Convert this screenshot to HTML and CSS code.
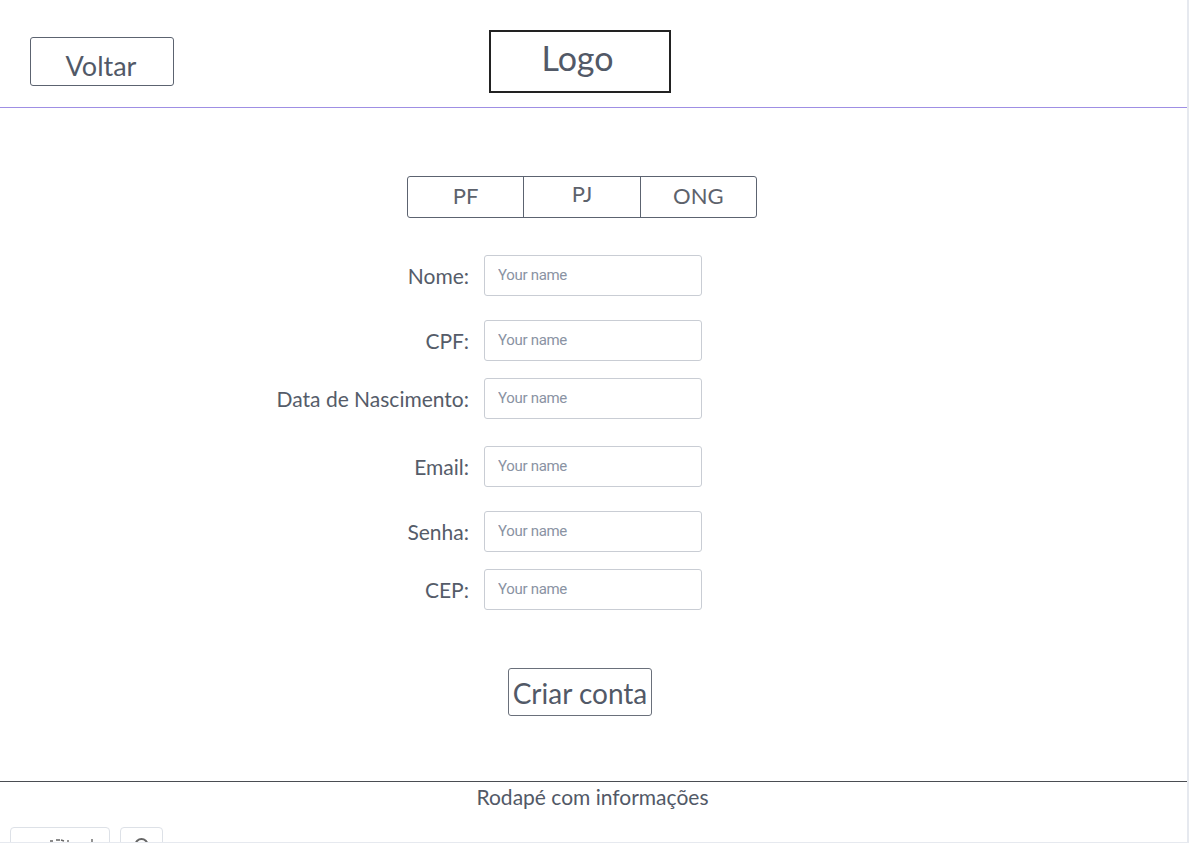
FILE: index.html
```html
<!DOCTYPE html>
<html lang="pt">
<head>
<meta charset="utf-8">
<title>Cadastro</title>
<link rel="stylesheet" href="styles.css">
</head>
<body>
<div class="frame">
  <header class="header">
    <button class="btn-back">Voltar</button>
    <div class="logo">Logo</div>
  </header>
  <main class="main">
    <div class="tabs">
      <div class="tab">PF</div>
      <div class="tab tab-pj">PJ</div>
      <div class="tab">ONG</div>
    </div>
    <form class="form">
      <div class="row row-first"><label class="label">Nome:</label><input class="input" placeholder="Your name"></div>
      <div class="row row-65"><label class="label">CPF:</label><input class="input" placeholder="Your name"></div>
      <div class="row row-58"><label class="label">Data de Nascimento:</label><input class="input" placeholder="Your name"></div>
      <div class="row row-68"><label class="label">Email:</label><input class="input" placeholder="Your name"></div>
      <div class="row row-65"><label class="label">Senha:</label><input class="input" placeholder="Your name"></div>
      <div class="row row-58"><label class="label">CEP:</label><input class="input" placeholder="Your name"></div>
      <div class="submit-row"><button type="button" class="btn-submit">Criar conta</button></div>
    </form>
  </main>
  <footer class="footer">
    <div class="footer-text">Rodapé com informações</div>
    <div class="toolbar">
      <div class="tool tool-wide">
        <svg class="tool-icon" width="100" height="16" viewBox="0 0 100 16"><path d="M40 13h3M46 12h4M51 12l3 1M58 12v4M82 11v5" stroke="#666" stroke-width="1.4" fill="none"/></svg>
      </div>
      <div class="tool tool-sq">
        <svg class="tool-icon" width="43" height="16" viewBox="0 0 43 16"><circle cx="21.5" cy="17" r="6" stroke="#666" stroke-width="2" fill="none"/></svg>
      </div>
    </div>
  </footer>
</div>
</body>
</html>
```

FILE: styles.css
```css
* { box-sizing: border-box; }
html, body { margin: 0; padding: 0; background: #ffffff; }
body { font-family: Lato, "Open Sans", sans-serif; color: #525967; overflow: hidden; }

.frame {
  width: 1189px;
  height: 843px;
  border-right: 2px solid #e6e9ef;
  border-bottom: 1px solid #e6e9ef;
  display: flex;
  flex-direction: column;
  overflow: hidden;
}

.header {
  height: 108px;
  border-bottom: 1px solid #9f8fe4;
  display: flex;
  align-items: flex-start;
  padding-left: 30px;
}

.btn-back {
  margin-top: 37px;
  width: 144px;
  height: 49px;
  border: 1.5px solid #5c6370;
  border-radius: 3px;
  background: #fff;
  font-family: Lato, sans-serif;
  font-size: 27px;
  color: #525967;
  padding: 8px 2px 0 0;
  line-height: 1;
}

.logo {
  margin-top: 30px;
  margin-left: 315px;
  width: 182px;
  height: 63px;
  border: 2px solid #222222;
  font-size: 34px;
  color: #525967;
  text-align: center;
  line-height: 1;
  padding-top: 9px;
  padding-right: 5px;
}

.main {
  flex: 1;
  display: flex;
  flex-direction: column;
}

.tabs {
  margin-top: 68px;
  margin-left: 407px;
  width: 350px;
  height: 42px;
  border: 1.5px solid #5c6370;
  border-radius: 3px;
  display: flex;
}
.tab {
  flex: 1;
  text-align: center;
  font-size: 22px;
  color: #5d626c;
  line-height: 1;
  padding-top: 8px;
}
.tab + .tab { border-left: 1.5px solid #5c6370; }
.tab-pj { padding-top: 6px; }

.form {
  margin-left: 260px;
  display: flex;
  flex-direction: column;
}
.row {
  display: grid;
  grid-template-columns: 209px 218px;
  column-gap: 15px;
  align-items: center;
}
.row-first { margin-top: 37px; }
.row-65 { margin-top: 24px; }
.row-58 { margin-top: 17px; }
.row-68 { margin-top: 27px; }

.label {
  text-align: right;
  font-size: 21px;
  color: #555c69;
  white-space: nowrap;
}
.input {
  width: 218px;
  height: 41px;
  border: 1px solid #c9cdd4;
  border-radius: 3px;
  padding: 0 0 1px 13px;
  font-family: Roboto, sans-serif;
  font-size: 15px;
  color: #333;
  background: #fff;
  outline: none;
}
.input::placeholder { color: #8a93a3; letter-spacing: -0.3px; }

.submit-row {
  margin-top: 58px;
  padding-left: 248px;
}
.btn-submit {
  width: 144px;
  height: 48px;
  border: 1.5px solid #6a707b;
  border-radius: 3px;
  background: #fff;
  font-family: Lato, sans-serif;
  font-size: 28px;
  color: #525967;
  padding: 2px 0 0 0;
  line-height: 1;
  white-space: nowrap;
}

.footer {
  border-top: 1.5px solid #4a4d52;
  height: 61px;
  position: relative;
}
.footer-text {
  text-align: center;
  font-size: 21px;
  color: #525967;
  padding-top: 2px;
  padding-right: 2px;
}
.toolbar {
  position: absolute;
  left: 10px;
  top: 45px;
  display: flex;
  gap: 10px;
}
.tool {
  height: 30px;
  border: 1px solid #dde1e7;
  border-radius: 4px;
  background: #fff;
  overflow: hidden;
}
.tool-icon { display: block; margin-left: -1px; }
.tool-wide { width: 100px; }
.tool-sq { width: 43px; }
```
